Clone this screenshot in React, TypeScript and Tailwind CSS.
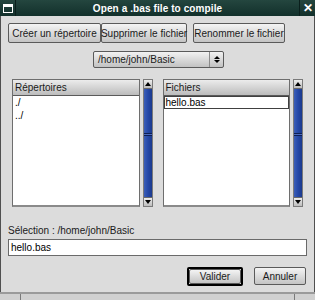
import React from 'react';

const font = { fontFamily: '"Liberation Sans", Arial, sans-serif' };

function Btn({ label, className = '' }: { label: string; className?: string }) {
  return (
    <div
      className={`flex items-center justify-center whitespace-nowrap border border-[#5a5a5a] rounded-[2px] bg-gradient-to-b from-[#f4f4f4] to-[#c4c4c4] text-[10px] text-[#1a1a1a] ${className}`}
    >
      {label}
    </div>
  );
}

function ScrollBar() {
  return (
    <div className="w-[10px] h-full flex flex-col border border-[#7a7a7a] bg-[#c8c8c8]">
      <div className="h-[9px] flex items-center justify-center bg-gradient-to-b from-[#eeeeee] to-[#bdbdbd] border-b border-[#6a6a6a]">
        <div className="w-0 h-0 border-l-[3px] border-r-[3px] border-b-[4px] border-l-transparent border-r-transparent border-b-black" />
      </div>
      <div className="flex-1 flex flex-col bg-gradient-to-r from-[#3c5fb8] via-[#2448a8] to-[#1c3a8c]">
        <div className="flex-1" />
        <div className="h-[1px] bg-[#0d1f55]" />
        <div className="h-[1px] bg-[#4c6cc0]" />
        <div className="h-[1px] bg-[#0d1f55]" />
        <div className="flex-[1.4]" />
      </div>
      <div className="h-[9px] flex items-center justify-center bg-gradient-to-b from-[#eeeeee] to-[#bdbdbd] border-t border-[#6a6a6a]">
        <div className="w-0 h-0 border-l-[3px] border-r-[3px] border-t-[4px] border-l-transparent border-r-transparent border-t-black" />
      </div>
    </div>
  );
}

function ListPanel({ title, items, selected }: { title: string; items: string[]; selected?: number }) {
  return (
    <div className="flex h-[128px] gap-[3px]">
      <div className="flex-1 flex flex-col border border-[#6e6e6e] border-b-2 border-b-[#8a8a8a] bg-white">
        <div className="h-[16px] flex items-center px-[2px] border-b border-[#5a5a5a] bg-gradient-to-b from-[#ececec] to-[#bcbcbc] text-[10px] text-[#1a1a1a]">
          {title}
        </div>
        <div className="flex flex-col text-[10px] text-black">
          {items.map((it, i) => (
            <div
              key={i}
              className={`h-[13px] leading-[13px] px-[2px] ${i === selected ? 'outline outline-1 outline-[#404040] -outline-offset-1' : ''}`}
            >
              {it}
            </div>
          ))}
        </div>
      </div>
      <ScrollBar />
    </div>
  );
}

export default function App() {
  return (
    <div className="w-[315px] h-[300px] flex flex-col bg-[#dcdcdc] overflow-hidden" style={font}>
      {/* title bar */}
      <div className="h-[16px] flex items-center bg-gradient-to-b from-[#24463f] to-[#12302b] text-white">
        <div className="w-[16px] h-[16px] flex items-center justify-center border-r border-[#0a1f1c]">
          <div className="w-[10px] h-[9px] border border-white flex flex-col">
            <div className="h-[2px] bg-white" />
          </div>
        </div>
        <div className="flex-1 text-center text-[10px] font-bold tracking-[0.1px]">Open a .bas file to compile</div>
        <div className="w-[16px] h-[16px] flex items-center justify-center border-l border-[#0a1f1c] text-[12px] font-bold">
          ✕
        </div>
      </div>

      <div className="flex-1 flex flex-col border-x border-[#505050] px-[7px]">
        <div className="flex mt-[7px] h-[20px]">
          <Btn label="Créer un répertoire" className="w-[93px]" />
          <Btn label="Supprimer le fichier" className="w-[86px]" />
          <Btn label="Renommer le fichier" className="w-[92px] ml-[6px]" />
        </div>

        <div className="flex justify-center mt-[8px] pl-[2px]">
          <div className="w-[131px] h-[17px] flex border border-[#5a5a5a] rounded-[2px] bg-gradient-to-b from-[#f2f2f2] to-[#c2c2c2] text-[10px] text-[#1a1a1a]">
            <div className="flex-1 flex items-center pl-[4px]">/home/john/Basic</div>
            <div className="w-[14px] flex flex-col items-center justify-center gap-[1px] border-l border-[#8a8a8a]">
              <div className="w-0 h-0 border-l-[3px] border-r-[3px] border-b-[3px] border-l-transparent border-r-transparent border-b-black" />
              <div className="w-0 h-0 border-l-[3px] border-r-[3px] border-t-[3px] border-l-transparent border-r-transparent border-t-black" />
            </div>
          </div>
        </div>

        <div className="grid grid-cols-2 gap-[10px] mt-[11px] pl-[4px] pr-[4px]">
          <ListPanel title="Répertoires" items={['./', '../']} />
          <ListPanel title="Fichiers" items={['hello.bas']} selected={0} />
        </div>

        <div className="mt-[17px] text-[10px] text-[#1a1a1a] leading-[13px]">Sélection : /home/john/Basic</div>
        <div className="mt-[2px] h-[17px] flex items-center border border-[#6a6a6a] bg-white px-[2px] text-[10px] text-black">
          hello.bas
        </div>

        <div className="flex justify-end mt-[11px] gap-[11px] pr-[1px]">
          <div className="w-[56px] h-[19px] border-2 border-black rounded-[2px] flex">
            <Btn label="Valider" className="flex-1" />
          </div>
          <Btn label="Annuler" className="w-[52px] h-[18px]" />
        </div>

        <div className="flex-1" />
      </div>

      <div className="h-[8px] flex border-t-2 border-[#9a9a9a] bg-[#d0d0d0]">
        <div className="w-[21px] border-r border-[#7a7a7a]" />
        <div className="flex-1 border-r border-[#7a7a7a]" />
        <div className="w-[20px]" />
      </div>
    </div>
  );
}
